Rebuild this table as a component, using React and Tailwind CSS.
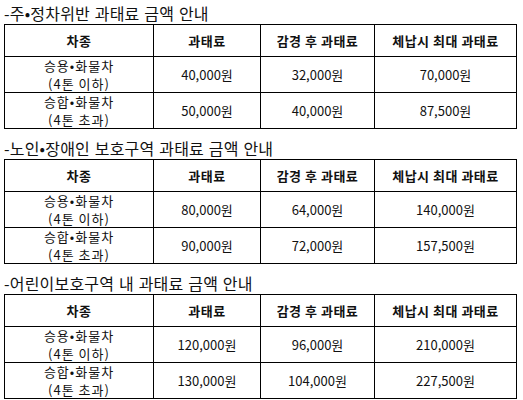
import React from "react";

const sections = [
  {
    title: "-주•정차위반 과태료 금액 안내",
    rows: [
      ["40,000원", "32,000원", "70,000원"],
      ["50,000원", "40,000원", "87,500원"],
    ],
  },
  {
    title: "-노인•장애인 보호구역 과태료 금액 안내",
    rows: [
      ["80,000원", "64,000원", "140,000원"],
      ["90,000원", "72,000원", "157,500원"],
    ],
  },
  {
    title: "-어린이보호구역 내 과태료 금액 안내",
    rows: [
      ["120,000원", "96,000원", "210,000원"],
      ["130,000원", "104,000원", "227,500원"],
    ],
  },
];

const types = [
  ["승용•화물차", "(4톤 이하)"],
  ["승합•화물차", "(4톤 초과)"],
];

export default function App() {
  return (
    <div
      className="w-[523px] h-[400px] bg-white text-[#111]"
      style={{ fontFamily: '"Noto Sans CJK KR", "Noto Sans", sans-serif' }}
    >
      {sections.map((s, i) => (
        <div key={i} className={i === 0 ? "" : "mt-[6px]"}>
          <div className="h-[24px] pt-[2px] pl-[4px] text-[16px] leading-[22px] tracking-[0.2px] [word-spacing:1px] text-[#111]">
            {s.title}
          </div>
          <table className="ml-[4px] w-[512px] table-fixed border-collapse border border-black text-[13px]">
            <colgroup>
              <col className="w-[149px]" />
              <col className="w-[107px]" />
              <col className="w-[114px]" />
              <col className="w-[142px]" />
            </colgroup>
            <thead>
              <tr className="h-[32px]">
                {["차종", "과태료", "감경 후 과태료", "체납시 최대 과태료"].map((h) => (
                  <th
                    key={h}
                    className="border border-black p-0 text-center align-middle font-bold tracking-[0.5px]"
                  >
                    {h}
                  </th>
                ))}
              </tr>
            </thead>
            <tbody>
              {s.rows.map((r, j) => (
                <tr key={j} className="h-[36px]">
                  <td className="border border-black p-0 text-center align-middle tracking-[1px]">
                    <div className="flex h-[34px] flex-col items-center justify-center leading-[18px]">
                      <div>{types[j][0]}</div>
                      <div>{types[j][1]}</div>
                    </div>
                  </td>
                  {r.map((v, k) => (
                    <td key={k} className="border border-black p-0 text-center align-middle">
                      {v}
                    </td>
                  ))}
                </tr>
              ))}
            </tbody>
          </table>
        </div>
      ))}
    </div>
  );
}
